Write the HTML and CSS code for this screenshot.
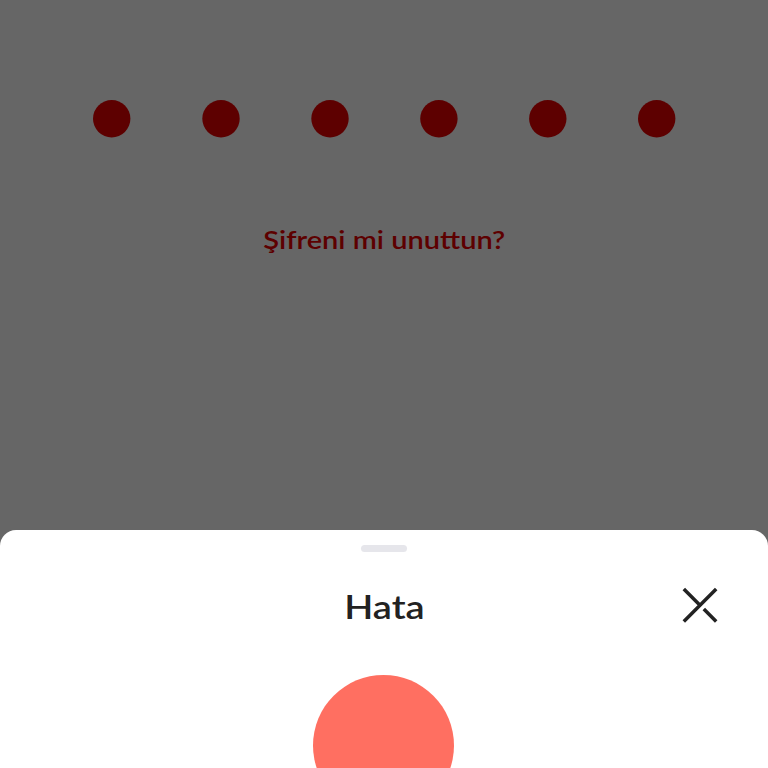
FILE: index.html
```html
<!DOCTYPE html>
<html lang="tr">
<head>
<meta charset="utf-8">
<title>Hata</title>
<link rel="stylesheet" href="styles.css">
</head>
<body>
<main class="screen">
  <div class="pin">
    <svg viewBox="0 0 38 38"><circle cx="18.7" cy="18.7" r="18.7"/></svg>
    <svg viewBox="0 0 38 38"><circle cx="19" cy="18.7" r="18.7"/></svg>
    <svg viewBox="0 0 38 38"><circle cx="19" cy="18.7" r="18.7"/></svg>
    <svg viewBox="0 0 38 38"><circle cx="18.9" cy="18.7" r="18.7"/></svg>
    <svg viewBox="0 0 38 38"><circle cx="18.8" cy="18.7" r="18.7"/></svg>
    <svg viewBox="0 0 38 38"><circle cx="18.7" cy="18.7" r="18.7"/></svg>
  </div>
  <a class="forgot"><span>Şifreni mi unuttun?</span></a>
  <section class="sheet">
    <div class="handle"></div>
    <header class="head">
      <h1><span>Hata</span></h1>
      <svg class="close" viewBox="0 0 36 36"><path d="M1.8 2L18 18.2M34.2 2L1.8 34.4M21.8 22L34.2 34.4"/></svg>
    </header>
    <div class="status"></div>
  </section>
</main>
</body>
</html>
```
FILE: styles.css
```css
* { box-sizing: border-box; }
body { margin: 0; }
.screen {
  width: 768px;
  height: 768px;
  overflow: hidden;
  display: flex;
  flex-direction: column;
  background: #666;
  font-family: Lato, sans-serif;
}
.pin {
  display: flex;
  justify-content: space-between;
  height: 138px;
  padding: 100px 92px 0 93px;
}
.pin svg {
  width: 38px;
  height: 38px;
  fill: #5d0000;
}
.forgot {
  margin-top: 81px;
  height: 40px;
  line-height: 40px;
  text-align: center;
  font-size: 25px;
  font-weight: 600;
  color: #5d0000;
  white-space: nowrap;
}
.forgot span,
h1 span {
  display: inline-block;
  transform: scaleX(1.16);
}
.sheet {
  margin-top: 271px;
  flex: 1;
  border-radius: 16px 16px 0 0;
  background: #fff;
  display: flex;
  flex-direction: column;
  align-items: center;
}
.handle {
  flex: none;
  margin-top: 15px;
  width: 46px;
  height: 7px;
  border-radius: 4px;
  background: #e6e6eb;
}
.head {
  flex: none;
  margin-top: 35px;
  width: 100%;
  height: 36px;
  padding: 0 50px;
  display: grid;
  grid-template-columns: 36px 1fr 36px;
}
h1 {
  grid-column: 2;
  margin: 0;
  text-align: center;
  font-size: 33px;
  line-height: 38px;
  font-weight: 600;
  color: #222;
}
h1 span { transform: translateX(0.5px) scaleX(1.15); }
.close {
  width: 36px;
  height: 36px;
  fill: none;
  stroke: #222;
  stroke-width: 3.5;
}
.status {
  flex: none;
  margin: 52px 1px 0 0;
  width: 141px;
  height: 141px;
  border-radius: 50%;
  background: #ff6f61;
}
```
